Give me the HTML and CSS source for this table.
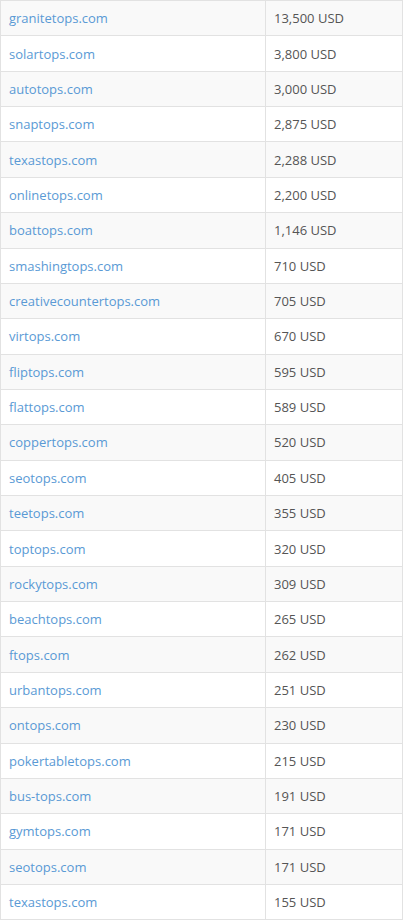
FILE: index.html
```html
<!DOCTYPE html>
<html>
<head>
<meta charset="utf-8">
<link rel="stylesheet" href="styles.css">
</head>
<body>
<table class="prices">
<tbody>
<tr><td class="dom"><a href="#">granitetops.com</a></td><td class="amt">13,500 USD</td></tr>
<tr><td class="dom"><a href="#">solartops.com</a></td><td class="amt">3,800 USD</td></tr>
<tr><td class="dom"><a href="#">autotops.com</a></td><td class="amt">3,000 USD</td></tr>
<tr><td class="dom"><a href="#">snaptops.com</a></td><td class="amt">2,875 USD</td></tr>
<tr><td class="dom"><a href="#">texastops.com</a></td><td class="amt">2,288 USD</td></tr>
<tr><td class="dom"><a href="#">onlinetops.com</a></td><td class="amt">2,200 USD</td></tr>
<tr><td class="dom"><a href="#">boattops.com</a></td><td class="amt">1,146 USD</td></tr>
<tr><td class="dom"><a href="#">smashingtops.com</a></td><td class="amt">710 USD</td></tr>
<tr><td class="dom"><a href="#">creativecountertops.com</a></td><td class="amt">705 USD</td></tr>
<tr><td class="dom"><a href="#">virtops.com</a></td><td class="amt">670 USD</td></tr>
<tr><td class="dom"><a href="#">fliptops.com</a></td><td class="amt">595 USD</td></tr>
<tr><td class="dom"><a href="#">flattops.com</a></td><td class="amt">589 USD</td></tr>
<tr><td class="dom"><a href="#">coppertops.com</a></td><td class="amt">520 USD</td></tr>
<tr><td class="dom"><a href="#">seotops.com</a></td><td class="amt">405 USD</td></tr>
<tr><td class="dom"><a href="#">teetops.com</a></td><td class="amt">355 USD</td></tr>
<tr><td class="dom"><a href="#">toptops.com</a></td><td class="amt">320 USD</td></tr>
<tr><td class="dom"><a href="#">rockytops.com</a></td><td class="amt">309 USD</td></tr>
<tr><td class="dom"><a href="#">beachtops.com</a></td><td class="amt">265 USD</td></tr>
<tr><td class="dom"><a href="#">ftops.com</a></td><td class="amt">262 USD</td></tr>
<tr><td class="dom"><a href="#">urbantops.com</a></td><td class="amt">251 USD</td></tr>
<tr><td class="dom"><a href="#">ontops.com</a></td><td class="amt">230 USD</td></tr>
<tr><td class="dom"><a href="#">pokertabletops.com</a></td><td class="amt">215 USD</td></tr>
<tr><td class="dom"><a href="#">bus-tops.com</a></td><td class="amt">191 USD</td></tr>
<tr><td class="dom"><a href="#">gymtops.com</a></td><td class="amt">171 USD</td></tr>
<tr><td class="dom"><a href="#">seotops.com</a></td><td class="amt">171 USD</td></tr>
<tr><td class="dom"><a href="#">texastops.com</a></td><td class="amt">155 USD</td></tr>
</tbody>
</table>
</body>
</html>
```

FILE: styles.css
```css
html, body {
  margin: 0;
  padding: 0;
  background: #fff;
}
body {
  font-family: "Open Sans", "Liberation Sans", sans-serif;
  font-size: 13px;
  color: #555;
}
.prices {
  width: 403px;
  border-collapse: collapse;
  table-layout: fixed;
}
.prices tr {
  height: 35.36px;
}
.prices tr:nth-child(odd) {
  background: #f9f9f9;
}
.prices td {
  border: 1px solid #e2e2e2;
  padding: 0 8px;
  vertical-align: middle;
  line-height: 20px;
}
.prices td.dom {
  width: 248px;
}
.prices a {
  color: #5a9ad5;
  text-decoration: none;
}
```
